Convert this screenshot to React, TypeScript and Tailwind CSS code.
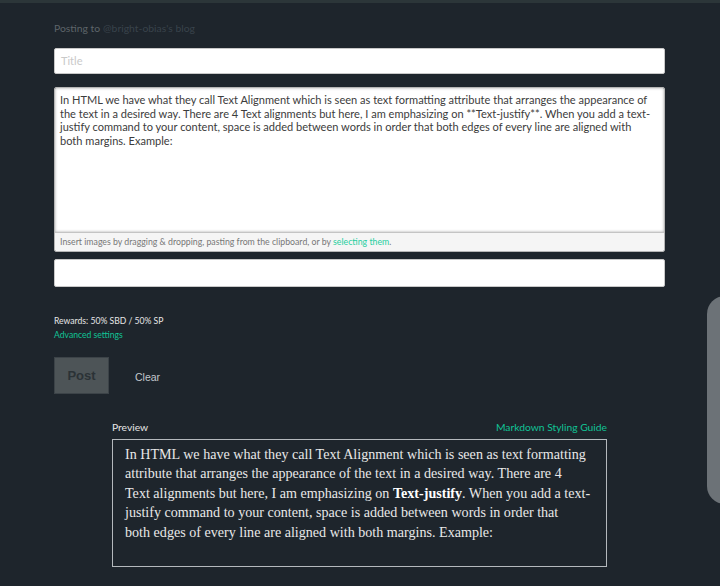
import React from 'react';

const bodyLines = [
  'In HTML we have what they call Text Alignment which is seen as text formatting attribute that arranges the appearance of',
  'the text in a desired way. There are 4 Text alignments but here, I am emphasizing on **Text-justify**. When you add a text-',
  'justify command to your content, space is added between words in order that both edges of every line are aligned with',
  'both margins. Example:',
];

function App() {
  return (
    <div className="relative min-h-[586px] bg-[#1e252c] overflow-hidden font-['Lato',sans-serif]">
      {/* top strip */}
      <div className="h-[3px] bg-[#2c3639]" />

      <main className="w-[611px] ml-[54px] pt-[18px]">
        <p className="text-[10.4px] leading-[14px] text-[#5d6469]">
          Posting to <span className="text-[#39434b]">@bright-obias's blog</span>
        </p>

        {/* title */}
        <div className="mt-[13px] h-[26px] rounded-[2px] border border-[#c8c8c8] bg-white px-[6px] flex items-center">
          <span className="text-[11px] text-[#c9c9c9]">Title</span>
        </div>

        {/* body */}
        <div className="mt-[13px] rounded-[2px] border border-[#b5b5b5] overflow-hidden">
          <div className="h-[144px] bg-white px-[5px] pt-[5px] shadow-[inset_0_0_3px_rgba(0,0,0,0.35)]">
            {bodyLines.map((l) => (
              <div key={l} className="whitespace-nowrap text-[11.05px] leading-[13.5px] text-[#3c3c3c]">
                {l}
              </div>
            ))}
          </div>
          <div className="h-[19px] bg-[#f5f5f5] border-t border-[#c4c4c4] px-[5px] flex items-center text-[8.75px] text-[#777]">
            Insert images by dragging &amp; dropping, pasting from the clipboard, or by&nbsp;
            <span className="text-[#1fcfa0]">selecting them</span>.
          </div>
        </div>

        {/* tags */}
        <div className="mt-[7px] h-[28px] rounded-[2px] border border-[#c8c8c8] bg-white" />

        <div className="mt-[27px] text-[8.6px] leading-[14px]">
          <p className="text-[#e6e6e6]">Rewards: 50% SBD / 50% SP</p>
          <p className="text-[#11c396]">Advanced settings</p>
        </div>

        <div className="mt-[15px] flex items-center">
          <button className="w-[55px] h-[37px] bg-[#4d5457] border border-[#3c4348] text-[13px] font-bold text-[#2b3236] font-['Liberation_Sans',sans-serif]">
            Post
          </button>
          <span className="ml-[26px] mt-[4px] text-[10.5px] text-[#c3c8cc] font-['Liberation_Sans',sans-serif]">Clear</span>
        </div>
      </main>

      {/* preview */}
      <section className="w-[495px] ml-[112px] mt-[26px]">
        <div className="flex justify-between items-end text-[10.3px] leading-[14px]">
          <span className="text-[#e6e6e6]">Preview</span>
          <span className="text-[#11c396]">Markdown Styling Guide</span>
        </div>
        <div className="mt-[5px] h-[128px] border border-[#b4b9bd] pl-[12px] pt-[5px] font-['Liberation_Serif',serif] text-[14.1px] leading-[19.4px] text-[#e8e8e8]">
          <div className="whitespace-nowrap">In HTML we have what they call Text Alignment which is seen as text formatting</div>
          <div className="whitespace-nowrap">attribute that arranges the appearance of the text in a desired way. There are 4</div>
          <div className="whitespace-nowrap">
            Text alignments but here, I am emphasizing on <strong className="font-bold text-white">Text-justify</strong>. When you add a text-
          </div>
          <div className="whitespace-nowrap">justify command to your content, space is added between words in order that</div>
          <div className="whitespace-nowrap">both edges of every line are aligned with both margins. Example:</div>
        </div>
      </section>

      {/* side panel peeking in from the right */}
      <div className="absolute left-[707px] top-[296px] w-[40px] h-[208px] rounded-[18px] bg-[#6c7277]" />
    </div>
  );
}

export default App;
